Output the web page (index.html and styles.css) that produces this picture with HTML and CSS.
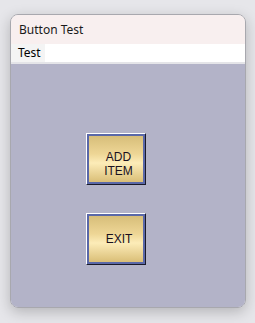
FILE: index.html
```html
<!DOCTYPE html>
<html>

<head>
    <title>Button Test</title>
    <meta charset="UTF-8">

    <link rel="stylesheet" href="styles.css">

</head>

<body>
    <div class="window">
        <div class="title-bar">Button Test</div>
        <div class="tab-strip">
            <span class="tab">Test</span>
        </div>
        <div class="panel">
            <button type="button" class="gold-btn two-line">ADD<br>ITEM</button>
            <button type="button" class="gold-btn">EXIT</button>
        </div>
    </div>
</body>

</html>
```

FILE: styles.css
```css
body {
    margin: 0;
    width: 255px;
    height: 323px;
    background-color: #e6e6ea;
    font-family: "Noto Sans", Arial, sans-serif;
    overflow: hidden;
}

.window {
    margin: 14px 0 0 10px;
    width: 234px;
    height: 292px;
    border: 1px solid #a8a8ae;
    border-radius: 8px;
    overflow: hidden;
    box-shadow: 0 4px 14px rgba(0, 0, 0, 0.22);
    display: flex;
    flex-direction: column;
}

.title-bar {
    height: 29px;
    line-height: 29px;
    padding-left: 8px;
    background-color: #f8efef;
    font-size: 12px;
    color: #1a1a1a;
}

.tab-strip {
    height: 18px;
    background-color: #ffffff;
    border-bottom: 2px solid #e4e4e8;
    display: flex;
}

.tab {
    padding: 0 4px 0 7px;
    background-color: #f4f4f4;
    font-size: 12px;
    line-height: 18px;
    color: #000000;
}

.panel {
    flex: 1;
    background-color: #b3b3c8;
    display: flex;
    flex-direction: column;
    align-items: flex-start;
    padding: 69px 0 0 75px;
    gap: 28px;
}

.gold-btn {
    width: 60px;
    height: 52px;
    padding: 0 0 0 6px;
    border: 1px solid;
    border-color: #ffffff #1a1a2a #1a1a2a #ffffff;
    box-shadow: inset 0 0 0 2px #5a68a8;
    background: linear-gradient(#d4bb76, #eed696 40%, #fcecb8 58%, #d6b970);
    font-family: "Liberation Sans", Arial, sans-serif;
    font-size: 12px;
    line-height: 14px;
    color: #1a1020;
    text-align: center;
}

.two-line {
    padding-top: 10px;
    padding-left: 5px;
}
```
